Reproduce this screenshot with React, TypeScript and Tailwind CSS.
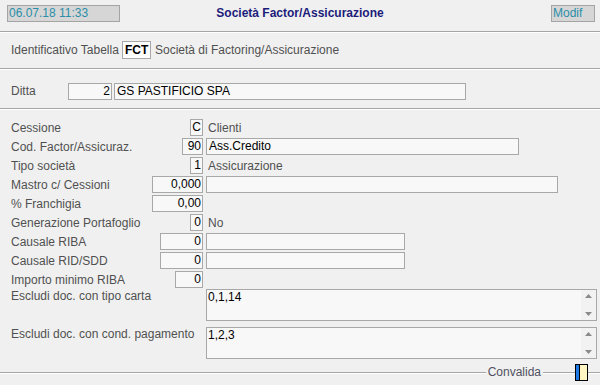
import React from "react";

const Sep = () => (
  <div className="h-[2px] shrink-0 border-t border-t-[#a6a6a6] border-b border-b-white" />
);

const Box = ({ w, children, left }: { w: string; children?: React.ReactNode; left?: boolean }) => (
  <div
    className={`${w} h-[17px] shrink-0 border border-[#a8a8a8] bg-[#f8f8f8] text-black leading-[15px] overflow-hidden whitespace-nowrap ${left ? "text-left pl-[2px]" : "text-right pr-[1px]"}`}
  >
    {children}
  </div>
);

const Row = ({
  label,
  boxW,
  value,
  extra,
}: {
  label: string;
  boxW: string;
  value: string;
  extra?: React.ReactNode;
}) => (
  <div className="h-[19px] flex items-center">
    <div className="w-[203px] shrink-0 pl-[11px] flex items-center">
      <div className="flex-1 whitespace-nowrap">{label}</div>
      <Box w={boxW}>{value}</Box>
    </div>
    <div className="ml-[3px] flex items-center">{extra}</div>
  </div>
);

const ScrollBar = () => (
  <div className="w-[15px] h-full flex flex-col justify-between items-center py-[4px] bg-[#f2f2f2]">
    <svg width="7" height="4" viewBox="0 0 7 4">
      <polygon points="0,4 7,4 3.5,0" fill="#8a8a8a" />
    </svg>
    <svg width="7" height="4" viewBox="0 0 7 4">
      <polygon points="0,0 7,0 3.5,4" fill="#8a8a8a" />
    </svg>
  </div>
);

const TextAreaRow = ({ label, value }: { label: string; value: string }) => (
  <div className="h-[32px] flex items-start">
    <div className="w-[203px] shrink-0 pl-[11px] leading-[15px] whitespace-nowrap">{label}</div>
    <div className="ml-[3px] w-[391px] h-[32px] border border-[#a8a8a8] bg-[#f8f8f8] flex">
      <div className="flex-1 pl-[1px] text-black leading-[15px]">{value}</div>
      <ScrollBar />
    </div>
  </div>
);

export default function App() {
  return (
    <div className="w-[600px] h-[385px] bg-[#f0f0f0] font-['Liberation_Sans',Arial,sans-serif] text-[12px] text-[#505050] overflow-hidden flex flex-col">
      {/* Header */}
      <div className="h-[31px] shrink-0 grid grid-cols-[1fr_auto_1fr] items-start pt-[5px] px-[5px]">
        <div className="flex justify-start pl-[2px]">
          <div className="w-[113px] h-[17px] bg-[#d6d6d6] border border-[#a4a4a4] text-[#2a8ea8] leading-[15px] pl-[1px]">
            06.07.18 11:33
          </div>
        </div>
        <div className="font-bold text-[#1c1c7a] leading-[17px] text-center">Società Factor/Assicurazione</div>
        <div className="flex justify-end">
          <div className="w-[44px] h-[17px] bg-[#d6d6d6] border border-[#a4a4a4] text-[#2a8ea8] leading-[15px] pl-[1px]">
            Modif
          </div>
        </div>
      </div>
      <Sep />
      {/* Identificativo */}
      <div className="h-[35px] shrink-0 flex items-start pt-[8px] pl-[11px]">
        <div className="w-[111px] leading-[18px] whitespace-nowrap">Identificativo Tabella</div>
        <div className="w-[29px] h-[18px] border border-[#a8a8a8] bg-white text-black font-bold leading-[16px] pl-[2px]">
          FCT
        </div>
        <div className="ml-[4px] leading-[18px]">Società di Factoring/Assicurazione</div>
      </div>
      <Sep />
      {/* Ditta */}
      <div className="h-[38px] shrink-0 flex items-start pt-[13px] pl-[11px]">
        <div className="w-[57px] leading-[17px]">Ditta</div>
        <Box w="w-[44px]">2</Box>
        <div className="ml-[2px]">
          <Box w="w-[352px]" left>
            GS PASTIFICIO SPA
          </Box>
        </div>
      </div>
      <Sep />
      {/* Main form */}
      <div className="h-[254px] shrink-0 flex flex-col pt-[8px]">
        <Row label="Cessione" boxW="w-[13px]" value="C" extra={<span className="ml-[2px]">Clienti</span>} />
        <Row
          label="Cod. Factor/Assicuraz."
          boxW="w-[21px]"
          value="90"
          extra={
            <Box w="w-[313px]" left>
              Ass.Credito
            </Box>
          }
        />
        <Row label="Tipo società" boxW="w-[13px]" value="1" extra={<span className="ml-[2px]">Assicurazione</span>} />
        <Row label="Mastro c/ Cessioni" boxW="w-[51px]" value="0,000" extra={<Box w="w-[352px]" left />} />
        <Row label="% Franchigia" boxW="w-[51px]" value="0,00" />
        <Row label="Generazione Portafoglio" boxW="w-[13px]" value="0" extra={<span className="ml-[2px]">No</span>} />
        <Row label="Causale RIBA" boxW="w-[43px]" value="0" extra={<Box w="w-[199px]" left />} />
        <Row label="Causale RID/SDD" boxW="w-[43px]" value="0" extra={<Box w="w-[199px]" left />} />
        <Row label="Importo minimo RIBA" boxW="w-[28px]" value="0" />
        <TextAreaRow label="Escludi doc. con tipo carta" value="0,1,14" />
        <div className="h-[6px]" />
        <TextAreaRow label="Escludi doc. con cond. pagamento" value="1,2,3" />
      </div>
      {/* Footer */}
      <div className="h-[17px] shrink-0 flex items-center">
        <div className="flex-1 h-[2px] border-t border-t-[#a6a6a6] border-b border-b-white" />
        <div className="px-[2px] leading-[15px] text-[#505060]">Convalida</div>
        <div className="w-[32px] h-[2px] border-t border-t-[#a6a6a6] border-b border-b-white" />
        <div className="w-[13px] h-[17px] border border-black flex">
          <div className="w-[4px] h-full bg-[#1e78e6] border-r border-black" />
          <div className="flex-1 h-full bg-[#fff6c4]" />
        </div>
        <div className="w-[12px] h-[2px] border-t border-t-[#a6a6a6] border-b border-b-white" />
      </div>
    </div>
  );
}
